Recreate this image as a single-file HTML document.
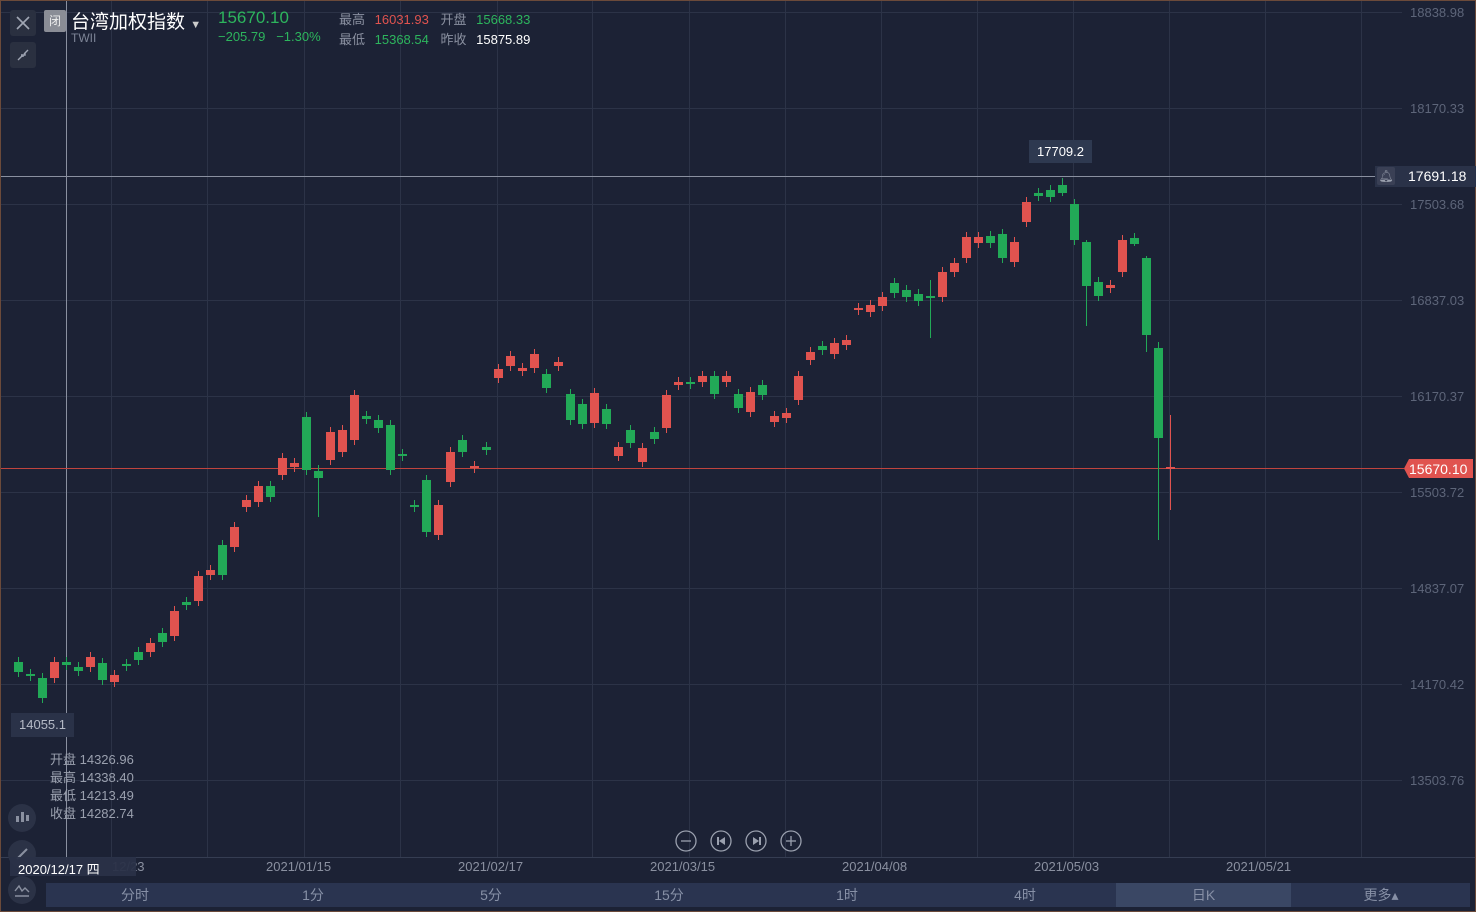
<!DOCTYPE html>
<html><head><meta charset="utf-8">
<style>
html,body{margin:0;padding:0;}
body{width:1476px;height:912px;background:#1c2235;overflow:hidden;position:relative;font-family:"Liberation Sans","Noto Sans CJK SC",sans-serif;}
.frame{position:absolute;left:0;top:0;width:1474px;height:910px;border:1px solid #6b4a3a;}
.t{position:absolute;white-space:nowrap;}
.ax{position:absolute;left:1410px;font-size:13px;color:#5d6579;}
.dx{position:absolute;top:859px;font-size:13px;color:#8a90a0;}
.tabs{position:absolute;left:46px;top:883px;width:1424px;height:24px;background:#2a3450;}
.tab{position:absolute;top:0;height:24px;line-height:24px;width:178px;text-align:center;font-size:14px;color:#8790a6;}
.sb{position:absolute;left:10px;width:26px;height:26px;background:#2a3040;border-radius:3px;}
.ci{position:absolute;left:8px;width:28px;height:28px;border-radius:50%;background:#2b3246;}
</style></head><body>
<svg width="1476" height="912" style="position:absolute;left:0;top:0" id="s">
<g stroke="#2c3347" stroke-width="1">
<line x1="0" y1="12.5" x2="1402" y2="12.5"/><line x1="0" y1="108.5" x2="1402" y2="108.5"/><line x1="0" y1="204.5" x2="1402" y2="204.5"/><line x1="0" y1="300.5" x2="1402" y2="300.5"/><line x1="0" y1="396.5" x2="1402" y2="396.5"/><line x1="0" y1="492.5" x2="1402" y2="492.5"/><line x1="0" y1="588.5" x2="1402" y2="588.5"/><line x1="0" y1="684.5" x2="1402" y2="684.5"/><line x1="0" y1="780.5" x2="1402" y2="780.5"/>
<line x1="111.5" y1="0" x2="111.5" y2="857"/><line x1="207.5" y1="0" x2="207.5" y2="857"/><line x1="304.5" y1="0" x2="304.5" y2="857"/><line x1="400.5" y1="0" x2="400.5" y2="857"/><line x1="497.5" y1="0" x2="497.5" y2="857"/><line x1="592.5" y1="0" x2="592.5" y2="857"/><line x1="689.5" y1="0" x2="689.5" y2="857"/><line x1="785.5" y1="0" x2="785.5" y2="857"/><line x1="881.5" y1="0" x2="881.5" y2="857"/><line x1="977.5" y1="0" x2="977.5" y2="857"/><line x1="1073.5" y1="0" x2="1073.5" y2="857"/><line x1="1169.5" y1="0" x2="1169.5" y2="857"/><line x1="1265.5" y1="0" x2="1265.5" y2="857"/><line x1="1361.5" y1="0" x2="1361.5" y2="857"/>
<line x1="0" y1="857.5" x2="1476" y2="857.5" stroke="#353d52"/>
</g>
<line x1="66.5" y1="0" x2="66.5" y2="860" stroke="#8a90a0" stroke-width="1"/>
<line x1="0" y1="176.5" x2="1380" y2="176.5" stroke="#8a90a0" stroke-width="1"/>
<line x1="0" y1="468.5" x2="1404" y2="468.5" stroke="#c0443e" stroke-width="1"/>
<g id="c"></g>
<g fill="none" stroke="#9aa0ae" stroke-width="1.3">
<circle cx="686" cy="841" r="10"/><line x1="681" y1="841" x2="691" y2="841"/>
<circle cx="721" cy="841" r="10"/><circle cx="756" cy="841" r="10"/>
<circle cx="791" cy="841" r="10"/><line x1="786" y1="841" x2="796" y2="841"/><line x1="791" y1="836" x2="791" y2="846"/>
</g>
<g fill="#9aa0ae"><rect x="717" y="837" width="2" height="8"/><path d="M725 837 L719 841 L725 845Z"/><rect x="759" y="837" width="2" height="8"/><path d="M753 837 L759 841 L753 845Z"/></g>
</svg>
<div class="frame"></div>
<div class="sb" style="top:10px"><svg width="26" height="26"><path d="M7 7L19 19M19 7L7 19" stroke="#a0a6b4" stroke-width="1.6"/></svg></div>
<div class="sb" style="top:42px"><svg width="26" height="26"><path d="M8 18L12 14M18 8L14 12M11 13h2v2M15 11v2h-2" stroke="#a0a6b4" stroke-width="1.4" fill="none"/></svg></div>
<div class="t" style="left:44px;top:10px;width:22px;height:22px;background:#8a8d96;border-radius:2px;color:#eee;font-size:12px;text-align:center;line-height:22px;">闭</div>
<div class="t" style="left:71px;top:7px;font-size:19px;color:#fff;">台湾加权指数 <span style="font-size:11px;color:#ccc">▼</span></div>
<div class="t" style="left:71px;top:31px;font-size:12px;color:#7d8496;">TWII</div>
<div class="t" style="left:218px;top:8px;font-size:17px;color:#2db55d;">15670.10</div>
<div class="t" style="left:218px;top:29px;font-size:13px;color:#2db55d;">−205.79 &nbsp;&nbsp;−1.30%</div>
<div class="t" style="left:339px;top:9px;font-size:13px;color:#8a90a0;">最高 <span style="color:#e0534f;margin-left:6px">16031.93</span> <span style="margin-left:8px">开盘</span> <span style="color:#2db55d;margin-left:6px">15668.33</span></div>
<div class="t" style="left:339px;top:29px;font-size:13px;color:#8a90a0;">最低 <span style="color:#2db55d;margin-left:6px">15368.54</span> <span style="margin-left:8px">昨收</span> <span style="color:#fff;margin-left:6px">15875.89</span></div>
<div class="ax" style="top:5px">18838.98</div>
<div class="ax" style="top:101px">18170.33</div>
<div class="t" style="left:1375px;top:166px;width:101px;height:21px;background:#2a3248;"></div>
<div class="t" style="left:1377px;top:167px;width:18px;height:18px;background:#3a4055;border-radius:2px;color:#9aa0ae;font-size:12px;text-align:center;line-height:18px">🔔︎</div>
<div class="t" style="left:1408px;top:168px;font-size:14px;color:#fff;">17691.18</div>
<div class="ax" style="top:197px">17503.68</div>
<div class="ax" style="top:293px">16837.03</div>
<div class="ax" style="top:389px">16170.37</div>
<div class="t" style="left:1404px;top:459px;width:69px;height:19px;background:#e0534f;clip-path:polygon(0 50%,5px 0,100% 0,100% 100%,5px 100%);"></div>
<div class="t" style="left:1409px;top:461px;font-size:14px;color:#fff;">15670.10</div>
<div class="ax" style="top:485px">15503.72</div>
<div class="ax" style="top:581px">14837.07</div>
<div class="ax" style="top:677px">14170.42</div>
<div class="ax" style="top:773px">13503.76</div>
<div class="t" style="left:1029px;top:140px;width:63px;height:23px;background:#2e3950;color:#fff;font-size:13px;text-align:center;line-height:23px;">17709.2</div>
<div class="t" style="left:11px;top:713px;width:63px;height:24px;background:#2a3248;color:#b5bac6;font-size:13px;text-align:center;line-height:24px;">14055.1</div>
<div class="t" style="left:50px;top:751px;font-size:13px;color:#9aa0ae;line-height:18px;">开盘 14326.96<br>最高 14338.40<br>最低 14213.49<br>收盘 14282.74</div>
<div class="ci" style="top:804px"><svg width="28" height="28"><g fill="#8a90a0"><rect x="8" y="12" width="3" height="6"/><rect x="13" y="8" width="3" height="10"/><rect x="18" y="11" width="3" height="6"/></g></svg></div>
<div class="ci" style="top:840px"><svg width="28" height="28"><path d="M9 19L19 9" stroke="#8a90a0" stroke-width="2"/></svg></div>
<div class="ci" style="top:876px"><svg width="28" height="28"><path d="M7 15L11 10L14 15L17 12L21 16M7 20H21" stroke="#8a90a0" stroke-width="1.4" fill="none"/></svg></div>
<div class="dx" style="left:112px">12/23</div>
<div class="t" style="left:10px;top:857px;width:126px;height:19px;background:#2a3248;opacity:.95"></div>
<div class="t" style="left:18px;top:859px;font-size:13px;color:#fff;">2020/12/17 四</div>
<div class="dx" style="left:266px">2021/01/15</div>
<div class="dx" style="left:458px">2021/02/17</div>
<div class="dx" style="left:650px">2021/03/15</div>
<div class="dx" style="left:842px">2021/04/08</div>
<div class="dx" style="left:1034px">2021/05/03</div>
<div class="dx" style="left:1226px">2021/05/21</div>
<div class="tabs">
<div class="tab" style="left:0">分时</div><div class="tab" style="left:178px">1分</div><div class="tab" style="left:356px">5分</div><div class="tab" style="left:534px">15分</div><div class="tab" style="left:712px">1时</div><div class="tab" style="left:890px">4时</div>
<div class="tab" style="left:1070px;background:#3a4764;width:175px">日K</div><div class="tab" style="left:1246px">更多▴</div>
</div>
<script>
var d=[[18,'g',662,672],[30,'g',674,676],[42,'g',678,698],[54,'r',662,678],[66,'g',662,665],[78,'g',667,671],[90,'r',657,667],[102,'g',663,680],[114,'r',675,682],[126,'g',664,666],[138,'g',652,660],[150,'r',643,652],[162,'g',633,642],[174,'r',611,636],[186,'g',602,605],[198,'r',576,601],[210,'r',570,575],[222,'g',545,575],[234,'r',527,547],[246,'r',500,507],[258,'r',486,502],[270,'g',486,497],[282,'r',458,475],[294,'r',463,467],[306,'g',417,470],[318,'g',471,478,465,517],[330,'r',432,460],[342,'r',430,452],[354,'r',395,440],[366,'g',416,419],[378,'g',420,428],[390,'g',425,470],[402,'g',454,456],[414,'g',505,507],[426,'g',480,532],[438,'r',505,535],[450,'r',452,482],[462,'g',440,452],[474,'r',466,468],[486,'g',447,450],[498,'r',369,378],[510,'r',356,366],[522,'r',368,371],[534,'r',354,368],[546,'g',374,388],[558,'r',362,366],[570,'g',394,420],[582,'g',404,424],[594,'r',393,423],[606,'g',409,424],[618,'r',447,456],[630,'g',430,443],[642,'r',448,462],[654,'g',432,439],[666,'r',395,428],[678,'r',382,385],[690,'g',382,384],[702,'r',376,382],[714,'g',376,394],[726,'r',376,382],[738,'g',394,408],[750,'r',392,412],[762,'g',385,395],[774,'r',416,422],[786,'r',413,418],[798,'r',376,400],[810,'r',352,360],[822,'g',346,350],[834,'r',343,354],[846,'r',340,345],[858,'r',308,310],[870,'r',305,312],[882,'r',297,306],[894,'g',283,293],[906,'g',290,297],[918,'g',294,301],[930,'g',296,298,280,338],[942,'r',272,297],[954,'r',263,272],[966,'r',237,258],[978,'r',237,243],[990,'g',236,243],[1002,'g',234,258],[1014,'r',242,262],[1026,'r',202,222],[1038,'g',193,196],[1050,'g',190,197],[1062,'g',185,193,178,196],[1074,'g',204,240],[1086,'g',242,286,240,326],[1098,'g',282,296],[1110,'r',285,288],[1122,'r',240,272],[1134,'g',238,244,233,246],[1146,'g',258,335,256,352],[1158,'g',348,438,342,540],[1170,'r',467,469,415,510]];
var h='';d.forEach(function(c){var col=c[1]=='g'?'#22a957':'#e0534f';var wt=c[4]||c[2]-5,wb=c[5]||c[3]+5;h+='<line x1="'+(c[0]+.5)+'" y1="'+wt+'" x2="'+(c[0]+.5)+'" y2="'+wb+'" stroke="'+col+'"/>';h+='<rect x="'+(c[0]-4)+'" y="'+c[2]+'" width="9" height="'+Math.max(2,c[3]-c[2])+'" fill="'+col+'"/>';});
document.getElementById('c').innerHTML=h;
</script>
</body></html>
